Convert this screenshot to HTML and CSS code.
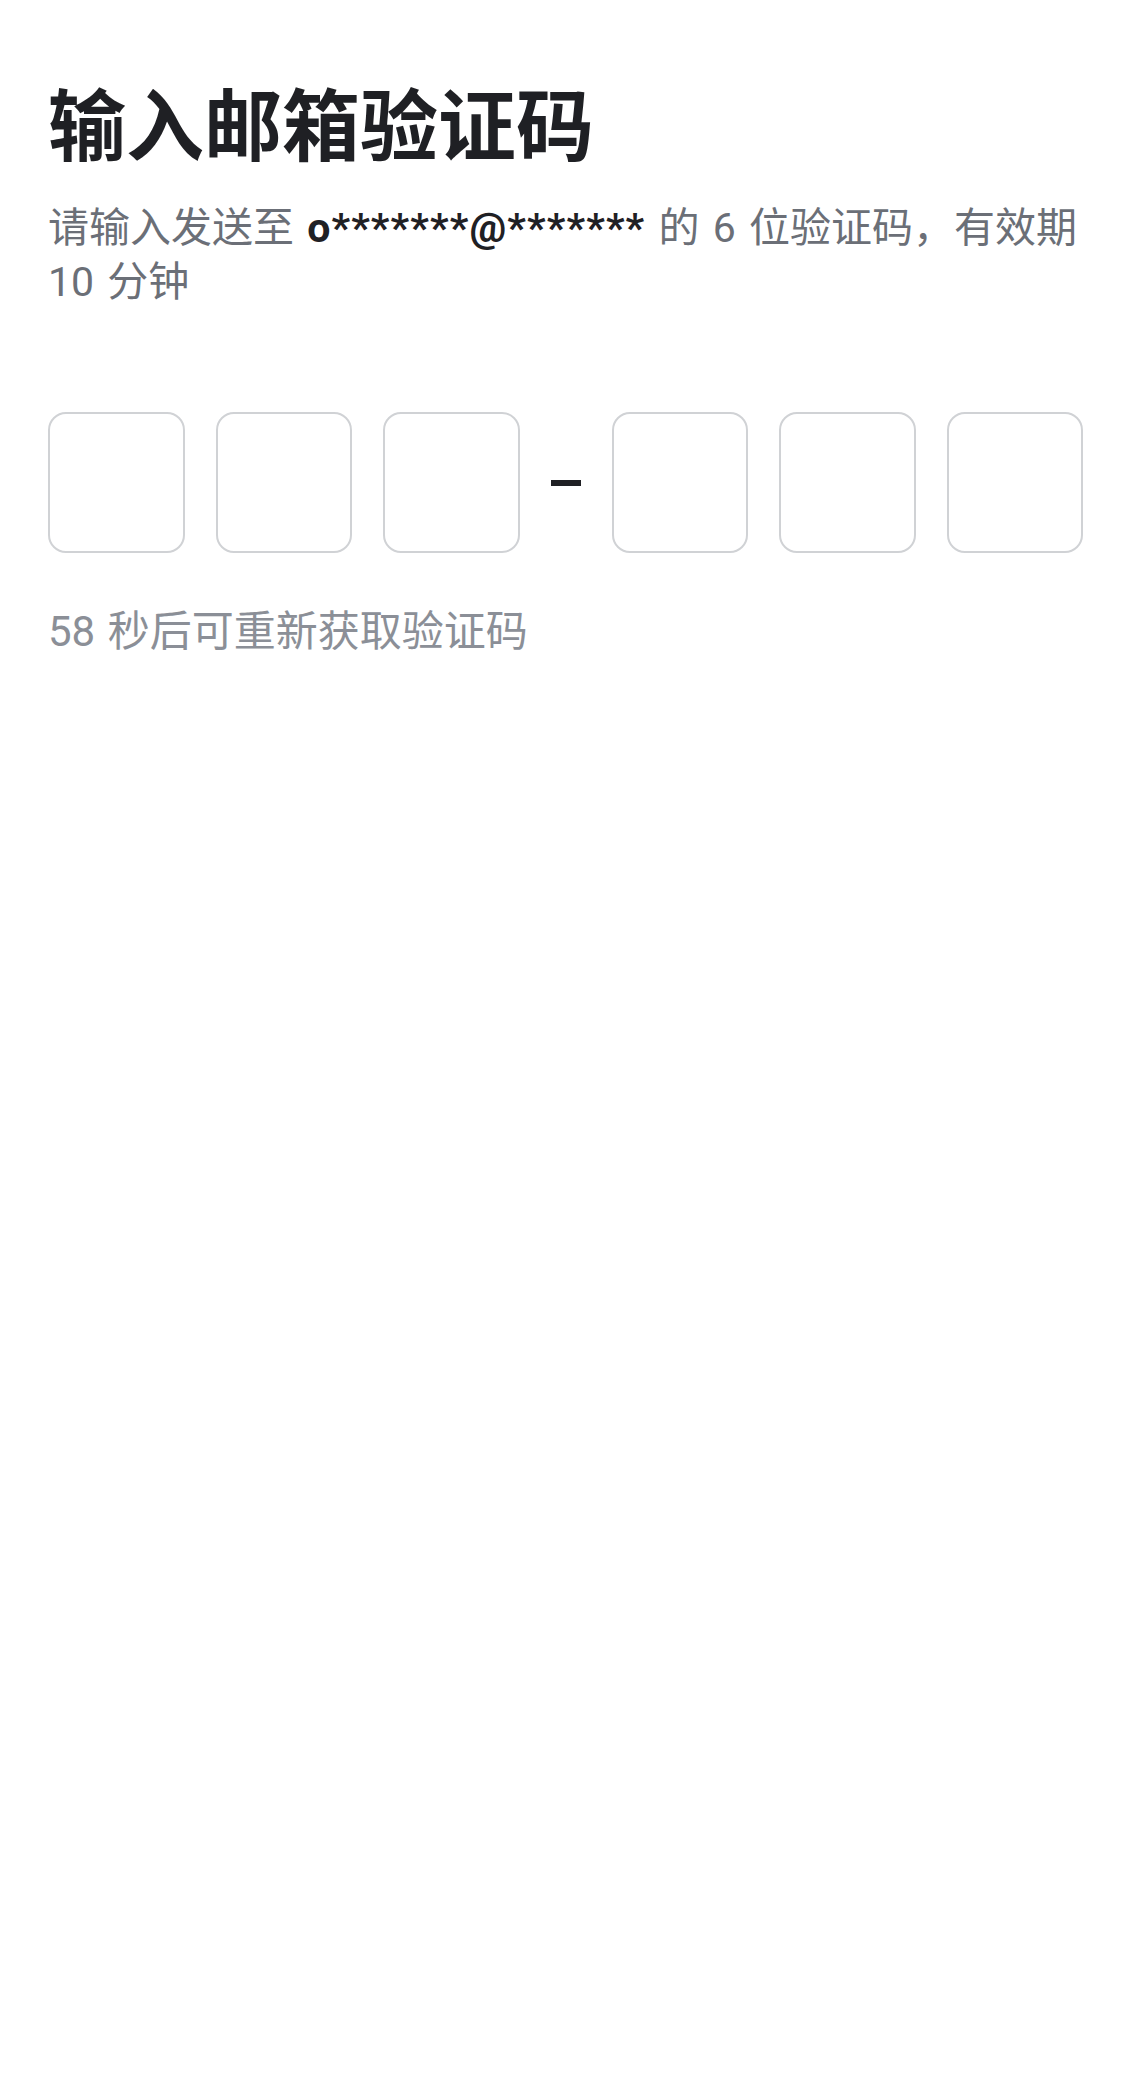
FILE: index.html
```html
<!DOCTYPE html>
<html lang="zh-CN">
<head>
  <meta charset="UTF-8">
  <meta name="viewport" content="width=device-width, initial-scale=1.0">
  <title>输入邮箱验证码</title>
  <link rel="stylesheet" href="styles.css">
</head>
<body>
  <main class="verify">
    <h1 class="verify-title">输入邮箱验证码</h1>
    <p class="verify-desc">请输入发送至 <strong class="email">o*******@*******</strong> 的 6 位验证码，有效期 10 分钟</p>

    <!-- Code inputs -->
    <div class="code-row">
      <input class="code-box" type="text" maxlength="1" inputmode="numeric">
      <input class="code-box" type="text" maxlength="1" inputmode="numeric">
      <input class="code-box" type="text" maxlength="1" inputmode="numeric">
      <span class="code-dash"></span>
      <input class="code-box" type="text" maxlength="1" inputmode="numeric">
      <input class="code-box" type="text" maxlength="1" inputmode="numeric">
      <input class="code-box" type="text" maxlength="1" inputmode="numeric">
    </div>

    <p class="resend">58 秒后可重新获取验证码</p>
  </main>
</body>
</html>
```

FILE: styles.css
```css
body {
  margin: 0;
  padding: 0;
  background-color: #fff;
  font-family: Roboto, "Noto Sans CJK SC", sans-serif;
}
.verify {
  padding: 72px 49px 0 48px;
}
.verify-title {
  margin: 0;
  font-family: "Noto Sans CJK SC", sans-serif;
  font-size: 78px;
  font-weight: 700;
  line-height: 98px;
  color: #1f2024;
}
.verify-desc {
  margin: 31px 0 0;
  font-size: 41px;
  line-height: 54px;
  word-spacing: 3px;
  color: #6b6f77;
}
.email {
  font-weight: 700;
  letter-spacing: 1.1px;
  color: #1f2024;
}
.code-row {
  display: flex;
  align-items: center;
  gap: 31px;
  margin-top: 103px;
}
.code-box {
  flex: 1;
  min-width: 0;
  height: 141px;
  box-sizing: border-box;
  border: 2.5px solid #d0d2d5;
  border-radius: 18px;
  background: #fff;
  font-size: 56px;
  text-align: center;
  outline: none;
}
.code-dash {
  width: 30px;
  height: 6px;
  background-color: #1f2024;
  flex-shrink: 0;
}
.resend {
  margin: 52px 0 0;
  font-size: 42px;
  line-height: 54px;
  word-spacing: 2px;
  color: #8b8f97;
}
```
